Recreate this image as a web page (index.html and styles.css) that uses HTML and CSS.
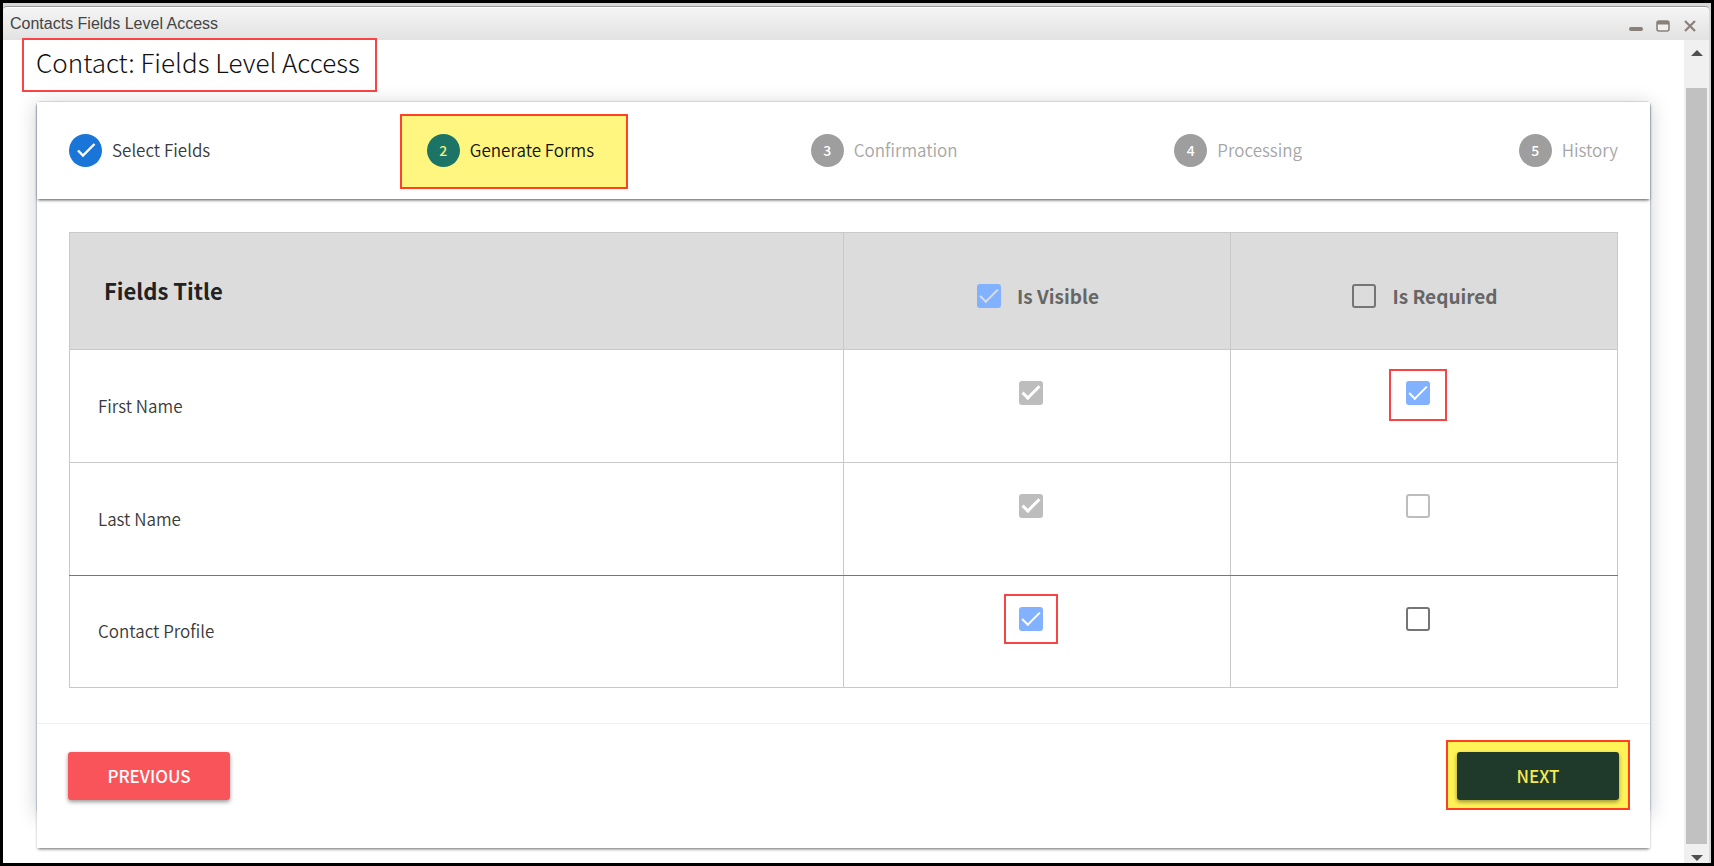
FILE: index.html
```html
<!DOCTYPE html>
<html lang="en">
<head>
  <meta charset="UTF-8">
  <meta name="viewport" content="width=device-width, initial-scale=1.0">
  <title>Contacts Fields Level Access</title>
  <link rel="stylesheet" href="styles.css">
</head>
<body>
  <div class="window">

    <!-- Title bar -->
    <header class="titlebar">
      <span class="titlebar-text">Contacts Fields Level Access</span>
      <div class="titlebar-buttons">
        <button type="button" aria-label="Minimize">
          <svg width="14" height="14" viewBox="0 0 14 14"><rect x="0" y="8" width="14" height="4" rx="2" fill="#8b8079"/></svg>
        </button>
        <button type="button" aria-label="Maximize">
          <svg width="14" height="14" viewBox="0 0 14 14"><rect x="1" y="2" width="12" height="10" rx="2" fill="#f0f0f0" stroke="#8b8079" stroke-width="1.6"/><path d="M1 2h12v3.500H1z" fill="#8b8079"/></svg>
        </button>
        <button type="button" aria-label="Close">
          <svg width="14" height="14" viewBox="0 0 14 14"><path d="M2 2l10 10M12 2L2 12" stroke="#8b8079" stroke-width="2.200" fill="none"/></svg>
        </button>
      </div>
    </header>

    <div class="window-body">
      <main class="content">
        <h1 class="page-title">Contact: Fields Level Access</h1>

        <section class="card">
          <div class="card-inner">

            <!-- Steps -->
            <ol class="stepper">
              <li class="step done">
                <span class="step-circle">
                  <svg width="20" height="20" viewBox="0 0 20 20"><path d="M2 10.500l5 5L18.500 4" fill="none" stroke="#fff" stroke-width="2.400"/></svg>
                </span>
                <span class="step-label">Select Fields</span>
              </li>
              <li class="step active">
                <span class="step-circle">2</span>
                <span class="step-label">Generate Forms</span>
              </li>
              <li class="step">
                <span class="step-circle">3</span>
                <span class="step-label">Confirmation</span>
              </li>
              <li class="step">
                <span class="step-circle">4</span>
                <span class="step-label">Processing</span>
              </li>
              <li class="step">
                <span class="step-circle">5</span>
                <span class="step-label">History</span>
              </li>
            </ol>

            <!-- Fields table -->
            <div class="table-wrap">
              <table class="fields-table">
                <thead>
                  <tr>
                    <th class="col-title">Fields Title</th>
                    <th class="col-check"><label><input type="checkbox" checked>Is Visible</label></th>
                    <th class="col-check"><label><input type="checkbox">Is Required</label></th>
                  </tr>
                </thead>
                <tbody>
                  <tr>
                    <td>First Name</td>
                    <td class="check"><span><input type="checkbox" aria-label="First Name is visible" checked disabled></span></td>
                    <td class="check"><span class="marked wide"><input type="checkbox" aria-label="First Name is required" checked></span></td>
                  </tr>
                  <tr class="group-end">
                    <td>Last Name</td>
                    <td class="check"><span><input type="checkbox" aria-label="Last Name is visible" checked disabled></span></td>
                    <td class="check"><span><input type="checkbox" aria-label="Last Name is required" disabled></span></td>
                  </tr>
                  <tr class="last">
                    <td>Contact Profile</td>
                    <td class="check"><span class="marked"><input type="checkbox" aria-label="Contact Profile is visible" checked></span></td>
                    <td class="check"><span><input type="checkbox" aria-label="Contact Profile is required"></span></td>
                  </tr>
                </tbody>
              </table>
            </div>

            <!-- Actions -->
            <div class="actions">
              <button type="button" class="btn btn-previous">PREVIOUS</button>
              <div class="next-wrap">
                <button type="button" class="btn btn-next">NEXT</button>
              </div>
            </div>

          </div>
        </section>
      </main>

      <div class="scrollbar" aria-hidden="true">
        <div class="scroll-up"></div>
        <div class="scroll-thumb"></div>
        <div class="scroll-down"></div>
      </div>
    </div>
  </div>
</body>
</html>
```

FILE: styles.css
```css
*,
*::before {
  box-sizing: border-box;
}

body {
  margin: 0;
  min-height: 100vh;
  padding: 3px;
  display: flex;
  background-color: #000;
  color: #3a3a3a;
  font-family: "Noto Sans CJK SC", "Open Sans", sans-serif;
  font-size: 17px;
  line-height: 24px;
}

button {
  font-family: inherit;
  cursor: pointer;
}

.window {
  flex: 1;
  display: flex;
  flex-direction: column;
  background-color: #d8d8d8;
  padding-top: 3px;
}

/* Title bar */
.titlebar {
  display: flex;
  align-items: center;
  justify-content: space-between;
  height: 34px;
  padding: 0 12px 0 7px;
  margin-right: 2px;
  border-top: 1px solid #999;
  border-radius: 4px 4px 0 0;
  box-shadow: inset 0 1px 0 #fff;
  background: linear-gradient(#f5f5f5, #e2e2e2);
}

.titlebar-text {
  font-family: "Liberation Sans", Arial, sans-serif;
  font-size: 16px;
  line-height: 20px;
  color: #444;
}

.titlebar-buttons {
  display: flex;
  gap: 13px;
  padding-top: 4px;
}

.titlebar-buttons button {
  display: flex;
  padding: 0;
  border: none;
  background: none;
}

.window-body {
  flex: 1;
  display: flex;
  margin-right: 2px;
}

.content {
  flex: 1;
  min-width: 0;
  padding: 0 33px 49px 33px;
  background-color: #fff;
}

.page-title {
  position: relative;
  width: fit-content;
  height: 54px;
  margin: -2px 0 9px -14px;
  padding: 0 15px 0 12px;
  border: 2px solid #f94445;
  color: #111;
  font-size: 26px;
  font-weight: 300;
  line-height: 44px;
}

/* Card */
.card {
  border: 1px solid #cfd9e6;
  border-radius: 4px;
  box-shadow: 0 3px 20px rgba(0, 0, 0, 0.18);
}

.card-inner {
  /* the panel hangs out below its frame */
  margin-bottom: -35px;
  background-color: #fff;
  box-shadow: 0 2px 3px -1px rgba(0, 0, 0, 0.6);
}

.stepper {
  display: flex;
  align-items: center;
  justify-content: space-between;
  height: 97px;
  margin: 0;
  padding: 0 32px;
  list-style: none;
  box-shadow: 0 2px 3px -1px rgba(0, 0, 0, 0.7);
}

.step {
  position: relative;
  display: flex;
  align-items: center;
  gap: 10px;
  color: #a6a6a6;
  font-weight: 350;
}

.step-label {
  padding-bottom: 2px;
}

.step-circle {
  display: flex;
  align-items: center;
  justify-content: center;
  width: 33px;
  height: 33px;
  padding-bottom: 2px;
  border-radius: 50%;
  background-color: #9e9e9e;
  color: #fff;
  font-size: 14px;
  font-weight: 500;
}

.step.done {
  color: #3a3a3a;
}

.step.done .step-circle {
  background-color: #1976d8;
}

.step.active {
  z-index: 0;
  color: #111;
}

.step.active::before {
  content: "";
  position: absolute;
  z-index: -1;
  inset: -20px -34px -22px -27px;
  border: 2px solid #ff4225;
  background-color: #fff680;
}

.step.active .step-circle {
  background-color: #1b7466;
  color: #f0ee80;
}

/* Fields table */
.table-wrap {
  padding: 33px 32px 35px;
  border-bottom: 1px solid #f0f0f0;
}

.fields-table {
  width: 100%;
  table-layout: fixed;
  border-collapse: collapse;
}

.fields-table th,
.fields-table td {
  border: 1px solid #c9c9c9;
}

.fields-table th {
  height: 117px;
  padding: 0;
  background-color: #dcdcdc;
  font-size: 19px;
  font-weight: 700;
}

.fields-table .col-title {
  width: 50%;
  padding: 0 0 2px 34px;
  color: #222;
  text-align: left;
  font-size: 22px;
}

.col-check {
  width: 25%;
}

.col-check label {
  display: flex;
  align-items: center;
  justify-content: center;
  gap: 16px;
  padding: 10px 0 0 2px;
  color: #666;
}

.fields-table td {
  height: 113px;
  padding: 0 28px 1px;
  font-weight: 350;
}

.fields-table td.check {
  padding: 18px 13px 0 0;
  text-align: center;
  vertical-align: top;
}

.check span {
  display: inline-flex;
  align-items: center;
  justify-content: center;
  width: 54px;
  height: 50px;
}

.check .marked {
  border: 2px solid #f94445;
}

.check .wide {
  width: 58px;
  height: 52px;
  margin-top: 1px;
  padding-bottom: 4px;
}

.fields-table .group-end td {
  border-bottom-color: #777;
}

.fields-table .last td {
  height: 112px;
}

/* Checkboxes */
input[type="checkbox"] {
  appearance: none;
  position: relative;
  flex: none;
  width: 24px;
  height: 24px;
  margin: 0;
  border: 2px solid #757575;
  border-radius: 3px;
}

input[type="checkbox"]:disabled {
  border-color: #bdbdbd;
}

input[type="checkbox"]:checked {
  border-color: #82b1ff;
  background-color: #82b1ff;
}

input[type="checkbox"]:checked:disabled {
  border-color: #bdbdbd;
  background-color: #bdbdbd;
}

input[type="checkbox"]:checked::before {
  content: "";
  position: absolute;
  top: 3px;
  left: 1px;
  width: 18px;
  height: 9px;
  border: solid #fff;
  border-width: 0 0 2px 2px;
  transform: rotate(-45deg);
}

input[type="checkbox"]:checked:disabled::before {
  border-width: 0 0 3px 3px;
}

th input[type="checkbox"]:checked::before {
  border-color: #dcdcdc;
}

/* Actions */
.actions {
  display: flex;
  align-items: baseline;
  justify-content: space-between;
  padding: 16px 20px 38px 31px;
}

.btn {
  width: 162px;
  height: 48px;
  padding: 0 0 2px;
  border: none;
  border-radius: 3px;
  box-shadow: 0 2px 4px rgba(0, 0, 0, 0.4);
  font-size: 17px;
  font-weight: 500;
}

.btn-previous {
  background-color: #fa545b;
  color: #fff;
}

.next-wrap {
  padding: 10px 9px 8px;
  border: 2px solid #ff4020;
  background-color: #fff357;
}

.btn-next {
  display: block;
  background-color: #1f3a2a;
  color: #f5ea55;
}

/* Scrollbar */
.scrollbar {
  display: flex;
  flex-direction: column;
  align-items: center;
  width: 25px;
  background-color: #f0f0f0;
}

.scroll-up {
  margin: 10px 0 32px;
  border: 6px solid transparent;
  border-top: none;
  border-bottom-color: #505050;
}

.scroll-thumb {
  flex: 1;
  width: 21px;
  background-color: #c1c1c1;
}

.scroll-down {
  margin: 11px 0 2px;
  border: 6px solid transparent;
  border-bottom: none;
  border-top-color: #505050;
}
```
